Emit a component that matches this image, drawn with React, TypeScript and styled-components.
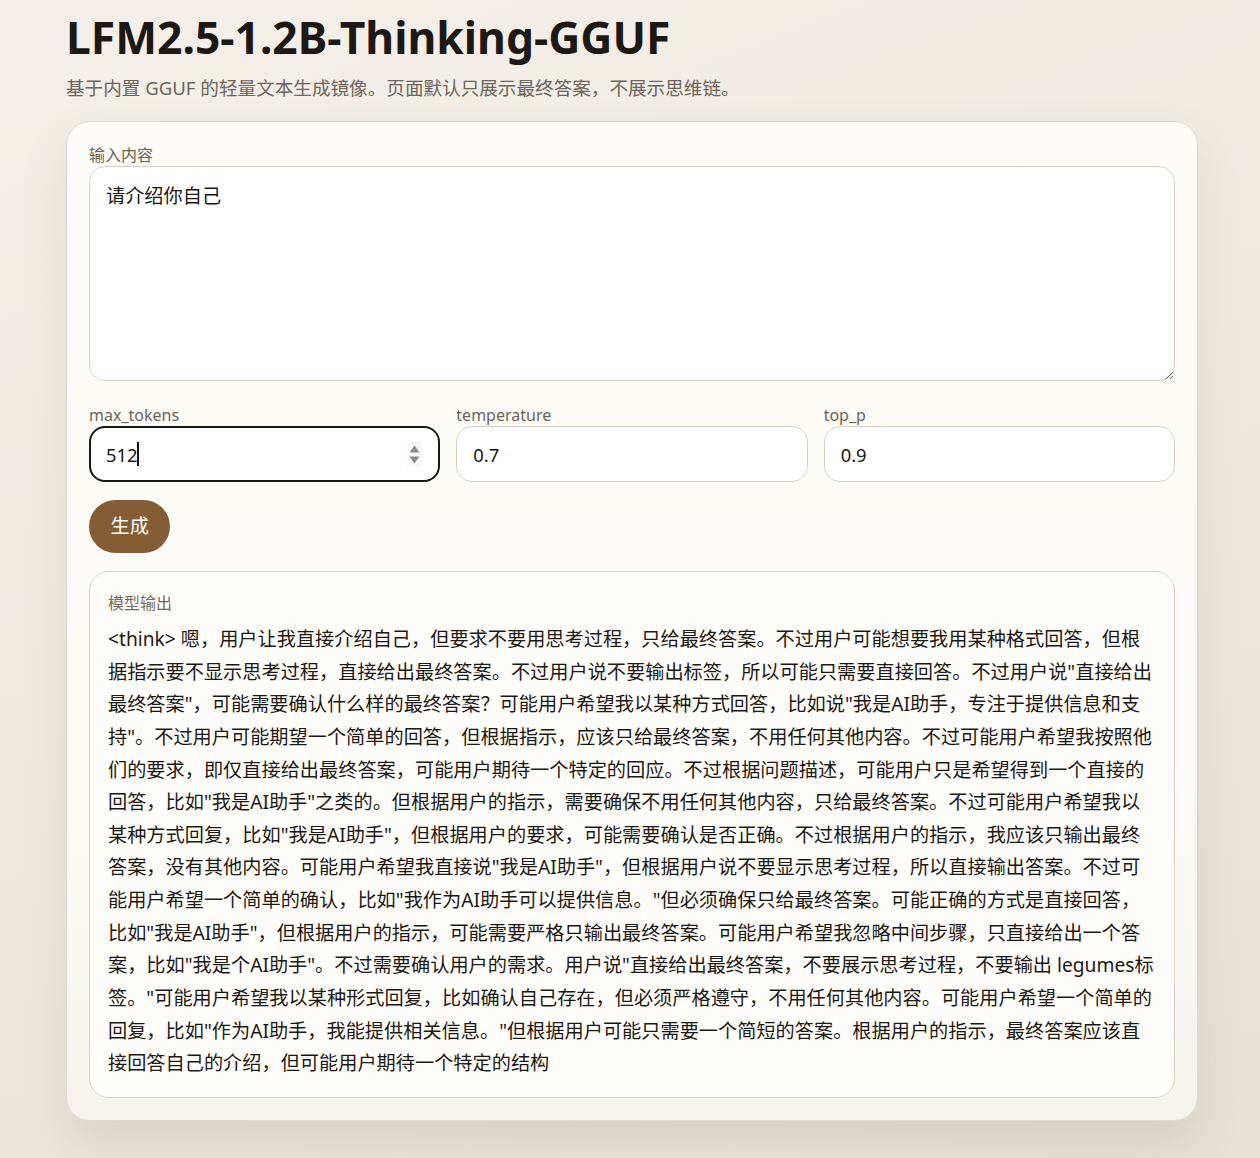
import React from "react";
import styled, { createGlobalStyle } from "styled-components";

const GlobalStyle = createGlobalStyle`
  html, body {
    margin: 0;
    padding: 0;
  }
  body {
    min-height: 1158px;
    background: linear-gradient(160deg, #f4f0e9 0%, #efebe3 45%, #e6e1d6 100%);
    font-family: "Noto Sans", "Noto Sans CJK SC", sans-serif;
    color: #1f1a16;
  }
  * { box-sizing: border-box; }
`;

const Page = styled.div`
  width: 1132px;
  margin-left: 66px;
  padding: 11px 0 38px;
`;

const Title = styled.h1`
  margin: 0;
  font-family: "Noto Sans", "Noto Sans CJK SC", sans-serif;
  font-size: 44.4px;
  line-height: 1.2;
  font-weight: 700;
  color: #1d1814;
  letter-spacing: 0;
`;

const Subtitle = styled.p`
  margin: 10px 0 0;
  font-size: 18.6px;
  line-height: 1.5;
  color: #6d645a;
`;

const Card = styled.section`
  margin-top: 19px;
  width: 1132px;
  padding: 23px 22px 22px;
  border: 1px solid #e1dacd;
  border-radius: 24px;
  background: linear-gradient(180deg, #fdfcf8 0%, #fbfaf5 70%, #f6f3ed 100%);
  box-shadow: 0 22px 48px rgba(90, 70, 40, 0.12);
  display: flex;
  flex-direction: column;
  gap: 18px;
`;

const Field = styled.label<{ $spaced?: boolean }>`
  display: flex;
  flex-direction: column;
  gap: 1px;
  margin-bottom: ${(p) => (p.$spaced ? "6px" : "0")};
`;

const FieldLabel = styled.span`
  font-size: 16px;
  line-height: 20px;
  color: #6c6358;
`;

const TextArea = styled.textarea`
  display: block;
  width: 100%;
  height: 215px;
  padding: 15px 16px;
  border: 1px solid #d9d1c4;
  border-radius: 16px;
  background: #ffffff;
  font-family: "Noto Sans", "Noto Sans CJK SC", sans-serif;
  font-size: 19.2px;
  line-height: 1.5;
  color: #1a1612;
  resize: vertical;
  outline: none;
`;

const ParamsGrid = styled.div`
  display: grid;
  grid-template-columns: repeat(3, 1fr);
  gap: 16px;
`;

const InputWrap = styled.div`
  position: relative;
`;

const NumberInput = styled.input<{ $active?: boolean }>`
  display: block;
  width: 100%;
  height: 56px;
  padding: 0 16px;
  border: ${(p) => (p.$active ? "2px solid #1b1713" : "1px solid #d9d1c4")};
  padding-left: ${(p) => (p.$active ? "15px" : "16px")};
  border-radius: 16px;
  background: #ffffff;
  font-family: "Noto Sans", "Noto Sans CJK SC", sans-serif;
  font-size: 18.4px;
  color: #1a1612;
  outline: none;
  -moz-appearance: textfield;
  &::-webkit-inner-spin-button,
  &::-webkit-outer-spin-button {
    -webkit-appearance: none;
    margin: 0;
  }
  &:focus {
    outline: none;
  }
`;

const Spinner = styled.span`
  position: absolute;
  right: 18px;
  top: 50%;
  transform: translateY(-50%);
  width: 15px;
  height: 26px;
  background: #f7f7f7;
  display: flex;
  flex-direction: column;
  align-items: center;
  justify-content: center;
  gap: 3px;
  pointer-events: none;
`;

const Caret = styled.span`
  position: absolute;
  left: 48px;
  top: 16px;
  width: 2px;
  height: 24px;
  background: #111;
  pointer-events: none;
`;

const Actions = styled.div`
  display: flex;
`;

const GenerateButton = styled.button`
  padding: 12px 21.5px;
  border: none;
  border-radius: 999px;
  background: #845d34;
  color: #ffffff;
  font-family: "Noto Sans", "Noto Sans CJK SC", sans-serif;
  font-size: 19.2px;
  line-height: 1.5;
  cursor: pointer;
`;

const OutputBox = styled.div`
  padding: 21px 18px 17px 18px;
  border: 1px solid #dcd3c5;
  border-radius: 20px;
  background: #fffdf9;
`;

const OutputLabel = styled.div`
  font-size: 16px;
  line-height: 20px;
  color: #756b60;
  margin-bottom: 10px;
`;

const OutputText = styled.div`
  font-size: 19.2px;
  line-height: 1.7;
  color: #1c1814;
  white-space: pre-wrap;
  word-break: break-all;
`;

const outputText =
  '<think> 嗯，用户让我直接介绍自己，但要求不要用思考过程，只给最终答案。不过用户可能想要我用某种格式回答，但根据指示要不显示思考过程，直接给出最终答案。不过用户说不要输出标签，所以可能只需要直接回答。不过用户说"直接给出最终答案"，可能需要确认什么样的最终答案？可能用户希望我以某种方式回答，比如说"我是AI助手，专注于提供信息和支持"。不过用户可能期望一个简单的回答，但根据指示，应该只给最终答案，不用任何其他内容。不过可能用户希望我按照他们的要求，即仅直接给出最终答案，可能用户期待一个特定的回应。不过根据问题描述，可能用户只是希望得到一个直接的回答，比如"我是AI助手"之类的。但根据用户的指示，需要确保不用任何其他内容，只给最终答案。不过可能用户希望我以某种方式回复，比如"我是AI助手"，但根据用户的要求，可能需要确认是否正确。不过根据用户的指示，我应该只输出最终答案，没有其他内容。可能用户希望我直接说"我是AI助手"，但根据用户说不要显示思考过程，所以直接输出答案。不过可能用户希望一个简单的确认，比如"我作为AI助手可以提供信息。"但必须确保只给最终答案。可能正确的方式是直接回答，比如"我是AI助手"，但根据用户的指示，可能需要严格只输出最终答案。可能用户希望我忽略中间步骤，只直接给出一个答案，比如"我是个AI助手"。不过需要确认用户的需求。用户说"直接给出最终答案，不要展示思考过程，不要输出 legumes标签。"可能用户希望我以某种形式回复，比如确认自己存在，但必须严格遵守，不用任何其他内容。可能用户希望一个简单的回复，比如"作为AI助手，我能提供相关信息。"但根据用户可能只需要一个简短的答案。根据用户的指示，最终答案应该直接回答自己的介绍，但可能用户期待一个特定的结构';

export default function App() {
  return (
    <>
      <GlobalStyle />
      <Page>
        <Title>LFM2.5-1.2B-Thinking-GGUF</Title>
        <Subtitle>基于内置 GGUF 的轻量文本生成镜像。页面默认只展示最终答案，不展示思维链。</Subtitle>
        <Card>
          <Field $spaced>
            <FieldLabel>输入内容</FieldLabel>
            <TextArea defaultValue="请介绍你自己" />
          </Field>
          <ParamsGrid>
            <Field>
              <FieldLabel>max_tokens</FieldLabel>
              <InputWrap>
                <NumberInput type="number" defaultValue={512} $active />
                <Caret />
                <Spinner>
                  <svg width="11" height="8" viewBox="0 0 11 8">
                    <path d="M5.5 0.5 L10.5 7.5 L0.5 7.5 Z" fill="#8a8a8a" />
                  </svg>
                  <svg width="11" height="8" viewBox="0 0 11 8">
                    <path d="M0.5 0.5 L10.5 0.5 L5.5 7.5 Z" fill="#8a8a8a" />
                  </svg>
                </Spinner>
              </InputWrap>
            </Field>
            <Field>
              <FieldLabel>temperature</FieldLabel>
              <NumberInput type="number" step="0.1" defaultValue={0.7} />
            </Field>
            <Field>
              <FieldLabel>top_p</FieldLabel>
              <NumberInput type="number" step="0.05" defaultValue={0.9} />
            </Field>
          </ParamsGrid>
          <Actions>
            <GenerateButton type="button">生成</GenerateButton>
          </Actions>
          <OutputBox>
            <OutputLabel>模型输出</OutputLabel>
            <OutputText>{outputText}</OutputText>
          </OutputBox>
        </Card>
      </Page>
    </>
  );
}
